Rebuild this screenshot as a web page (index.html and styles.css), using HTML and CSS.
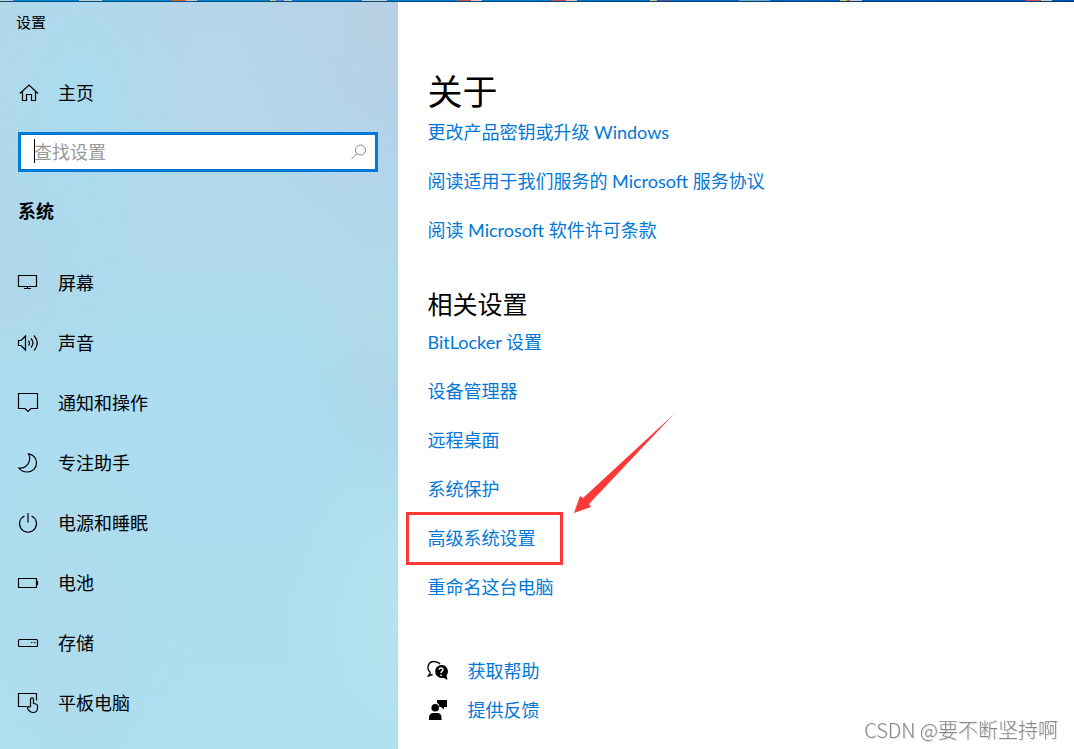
FILE: index.html
```html
<!DOCTYPE html>
<html lang="zh-CN">
<head>
  <meta charset="UTF-8">
  <meta name="viewport" content="width=device-width, initial-scale=1.0">
  <title>设置</title>
  <link rel="stylesheet" href="styles.css">
</head>
<body>
  <!-- desktop strip above the window -->
  <svg class="desktop-strip" viewBox="0 0 1074 2" preserveAspectRatio="none" aria-hidden="true">
    <g fill="#c9ccc9">
      <path d="M0 0h13v1H0zM79 0h23v1H79zM186 0h11v1h-11zM284 0h8v1h-8zM362 0h25v1h-25zM471 0h11v1h-11zM566 0h11v1h-11zM850 0h12v1h-12zM1041 0h11v1h-11z"/>
    </g>
    <path fill="#d9602c" d="M172 0h14v1h-14z"/>
    <path fill="#d8c478" d="M270 0h6v1h-6zM650 0h7v1h-7zM840 0h7v1h-7z"/>
    <path fill="#5b7fd0" d="M277 0h6v1h-6z"/>
    <path fill="#c9504f" d="M457 0h14v1h-14zM551 0h15v1h-15zM847 0h3v1h-3zM1026 0h15v1h-15z"/>
    <path fill="#6b4a9a" d="M660 0h12v1h-12z"/>
    <path fill="#72a8c6" d="M739 0h31v1h-31z"/>
  </svg>

  <div class="window">
    <aside class="sidebar">
      <div class="window-title">设置</div>

      <a class="home" href="#">
        <svg class="icon" viewBox="0 0 20 20"><path d="M2 10.500 11 2l9 8.500M4.500 8.500v9h4v-6h5v6h4v-9"/></svg>
        <span>主页</span>
      </a>

      <div class="search">
        <input type="text" id="search" placeholder="查找设置" aria-label="查找设置">
        <span class="caret"></span>
        <button type="button" aria-label="搜索">
          <svg viewBox="0 0 16 16"><circle cx="9.500" cy="6" r="5"/><path d="M6 9.500.5 15"/></svg>
        </button>
      </div>

      <h2 class="category">系统</h2>

      <nav class="menu">
        <a href="#">
          <svg class="icon" viewBox="0 0 20 20"><path d="M.5 2.500h18v11H.5zM9.500 13.500v2M6 15.500h7"/></svg>
          <span>屏幕</span>
        </a>
        <a href="#">
          <svg class="icon" viewBox="0 0 20 20"><path d="M.5 7.500H3L7.500 3v14L3 12.500H.5zM10.500 7.500q2 2.500 0 5M13 5.500q4 4.500 0 9M16 2.500q6.500 7.500 0 15"/></svg>
          <span>声音</span>
        </a>
        <a href="#">
          <svg class="icon" viewBox="0 0 20 20"><path d="M.5.500h19v15h-6.500L10 18.500 7 15.500H.5z"/></svg>
          <span>通知和操作</span>
        </a>
        <a href="#">
          <svg class="icon" viewBox="0 0 20 20"><path d="M10.500.8C15.500 1.500 18.500 5.500 18.500 10a9 9 0 0 1-9 9C5.500 19 2.500 17.500.8 15c7 1 13.500-6 9.700-14.200z"/></svg>
          <span>专注助手</span>
        </a>
        <a href="#">
          <svg class="icon" viewBox="0 0 20 20"><path d="M6.500 3a8.500 8.500 0 1 0 7 0"/><path d="M10 0v9.500"/></svg>
          <span>电源和睡眠</span>
        </a>
        <a href="#">
          <svg class="icon" viewBox="0 0 20 20"><path d="M.5 5.500h18v9H.5z"/><path d="M19.500 8v4"/></svg>
          <span>电池</span>
        </a>
        <a href="#">
          <svg class="icon" viewBox="0 0 20 20"><rect x=".5" y="6.500" width="19" height="7" rx="1"/><path d="M13 9.500h1.500M16 9.500h1.500"/></svg>
          <span>存储</span>
        </a>
        <a href="#">
          <svg class="icon" viewBox="0 0 20 20"><path d="M8.500 13.500H.5v-13h18v7M12.500 13.500V6.500c0-2.200 3-2.200 3 0v4l2.500.5c1 .3 1.500 1 1.500 2v2c0 3-1.500 4.500-4.500 4.500-2.500 0-4-1.500-5.500-4-.8-1.500.5-2.500 1.500-1.500z"/></svg>
          <span>平板电脑</span>
        </a>
      </nav>
    </aside>

    <main class="content">
      <h1>关于</h1>
      <ul class="links">
        <li><a href="#">更改产品密钥或升级 Windows</a></li>
        <li><a href="#">阅读适用于我们服务的 Microsoft 服务协议</a></li>
        <li><a href="#">阅读 Microsoft 软件许可条款</a></li>
      </ul>

      <h2>相关设置</h2>
      <ul class="links">
        <li><a href="#">BitLocker 设置</a></li>
        <li><a href="#">设备管理器</a></li>
        <li><a href="#">远程桌面</a></li>
        <li><a href="#">系统保护</a></li>
        <li class="marked">
          <a href="#">高级系统设置</a>
          <svg class="arrow" viewBox="0 0 100 100" aria-hidden="true"><path d="M0 99 6 82l3 2L100 0 15 90l2 3z"/></svg>
        </li>
        <li><a href="#">重命名这台电脑</a></li>
      </ul>

      <div class="support">
        <a href="#">
          <svg class="icon" viewBox="0 0 20 20">
            <path d="M3.500 11.500A6 6 0 0 1 8 .7c2.500 0 4 1 5 2.300M3.500 11.500 1.500 15l4-1.500" stroke-width="1.400"/>
            <path class="solid" d="M14 4a6.500 6.500 0 1 0 2.500 12.700L20.500 19l-1-4.500A6.500 6.500 0 0 0 14 4z"/>
            <path class="mark" d="M12 8.800c.2-2.500 4-2.500 4-.2 0 1.500-2 1.600-2 3.300M14 13.400v1.500"/>
          </svg>
          <span>获取帮助</span>
        </a>
        <a href="#">
          <svg class="icon" viewBox="0 0 20 20">
            <path class="solid" d="M10 0h10v7h-3v2.500L14 7h-1.500C12 4.500 11.500 3.500 10 3zM2 20v-2.500c0-3 2-4.500 4-4.500h4.500c2.500 0 4 1.500 4 4.500V20z"/>
            <circle class="solid" cx="8.200" cy="7.800" r="3.800"/>
          </svg>
          <span>提供反馈</span>
        </a>
      </div>
    </main>
  </div>

  <div class="watermark">CSDN @要不断坚持啊</div>
</body>
</html>
```
FILE: styles.css
```css
* { box-sizing: border-box; margin: 0; padding: 0; }
body {
  display: flex;
  flex-direction: column;
  min-height: 100vh;
  font-family: "Noto Sans CJK SC", sans-serif;
  font-size: 18px;
  color: #000;
  background: #fff;
}
a {
  color: inherit;
  text-decoration: none;
}
.desktop-strip {
  display: block;
  width: 100%;
  height: 2px;
  background: linear-gradient(to bottom, transparent 1px, rgba(0,40,80,0.6) 1px), linear-gradient(to right, #008cd8, #0078c8 50%, #0050b4);
}
.window {
  flex: 1;
  display: flex;
}
.sidebar {
  flex: 0 0 37.1%;
  padding: 8px 20px 16px 18px;
  background:
    radial-gradient(ellipse at 95% 3%, rgba(185,208,227,0.9), rgba(185,208,227,0) 25%),
    radial-gradient(ellipse at 100% 15%, rgba(169,215,242,0.9), rgba(169,215,242,0) 25%),
    radial-gradient(ellipse at 20% 15%, rgba(169,219,240,0.9), rgba(169,219,240,0) 25%),
    radial-gradient(ellipse at 100% 38%, rgba(179,219,230,0.9), rgba(179,219,230,0) 20%),
    radial-gradient(ellipse at 0% 32%, rgba(176,214,233,0.9), rgba(176,214,233,0) 25%),
    radial-gradient(ellipse at 100% 52%, rgba(173,212,232,0.9), rgba(173,212,232,0) 20%),
    radial-gradient(ellipse at 20% 86%, rgba(176,219,236,0.9), rgba(176,219,236,0) 25%),
    radial-gradient(ellipse at 100% 82%, rgba(182,228,238,0.9), rgba(182,228,238,0) 20%),
    linear-gradient(to bottom, #b4d6e8, #b3d9ea 28%, #abdcf0 48%, #addff0);
}
.window-title {
  font-size: 15px;
  line-height: 24px;
  margin-left: -2px;
}
.home, .menu a, .support a {
  display: flex;
  align-items: center;
  gap: 20px;
}
.home span, .menu span, .support span {
  padding-bottom: 2px;
}
.home {
  height: 40px;
  margin-top: 39px;
}
.icon {
  flex: none;
  width: 20px;
  height: 20px;
  overflow: visible;
  fill: none;
  stroke: #000;
  stroke-width: 1.2;
}
.search {
  position: relative;
  display: flex;
  height: 40px;
  margin-top: 19px;
  border: 3px solid #0078d7;
  background: #fff;
}
.search input {
  flex: 1;
  min-width: 0;
  padding: 0 0 2px 13px;
  border: none;
  outline: none;
  background: none;
  font: inherit;
}
.search input::placeholder {
  color: #999;
}
.search .caret {
  position: absolute;
  left: 13px;
  top: 4px;
  width: 1px;
  height: 24px;
  background: #000;
}
.search button {
  width: 32px;
  border: none;
  background: none;
}
.search svg {
  display: block;
  width: 16px;
  height: 16px;
  margin: 0 auto;
  fill: none;
  stroke: #888;
}
.category {
  margin-top: 23px;
  font-size: 18px;
  font-weight: 700;
  line-height: 30px;
}
.menu {
  margin-top: 28px;
}
.menu a {
  height: 60px;
}
.content {
  flex: 1;
  padding: 72px 29px 16px;
}
h1 {
  font-size: 35px;
  font-weight: 400;
  line-height: 32px;
  margin-bottom: 2px;
}
.content h2 {
  margin: 34px 0 1px;
  font-size: 25px;
  font-weight: 400;
  line-height: 28px;
}
.links {
  list-style: none;
  font-family: Lato, "Noto Sans CJK SC", sans-serif;
  line-height: 49px;
  color: #0078d7;
}
/* red frame and arrow drawn over the list */
.marked {
  position: relative;
  width: max-content;
}
.marked::after {
  content: "";
  position: absolute;
  inset: -2px -28px -2px -21px;
  border: 3px solid #fc3939;
  pointer-events: none;
}
.arrow {
  position: absolute;
  left: calc(100% + 39px);
  bottom: 49px;
  width: 100px;
  height: 100px;
  fill: #fc3939;
  pointer-events: none;
}
.support {
  margin-top: 39px;
  color: #0078d7;
}
.support a {
  width: max-content;
  height: 39px;
}
.icon .solid {
  fill: #000;
  stroke: none;
}
.icon .mark {
  stroke: #fff;
  stroke-width: 1.5;
}
.watermark {
  position: fixed;
  right: 16px;
  bottom: 5px;
  font-size: 20px;
  font-weight: 300;
  line-height: 28px;
  color: #888;
  text-shadow: 1px 1px 0 #e4e4e4;
}
```
